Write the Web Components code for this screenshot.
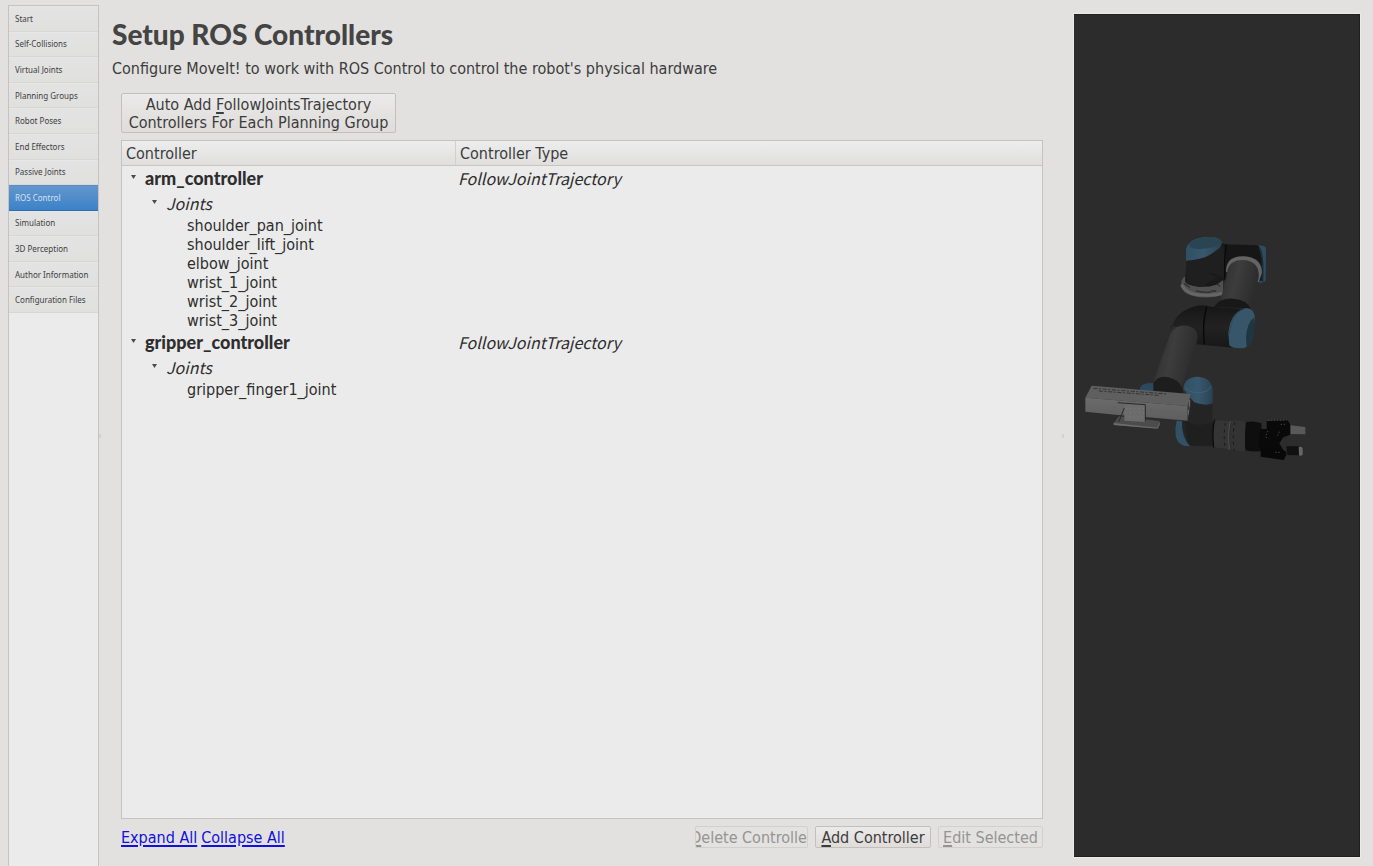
<!DOCTYPE html>
<html lang="en">
<head>
<meta charset="utf-8">
<title>MoveIt! Setup Assistant</title>
<style>
html, body { margin: 0; height: 100%; }
body { overflow: hidden; background: #e2e1df; color: #3c3c3c;
  --ui: "DejaVu Sans Condensed", "DejaVu Sans", sans-serif; --strong: Lato, "Noto Sans", sans-serif;
  --slanted: "Noto Sans CJK SC", "Noto Sans", sans-serif; --small: "Noto Sans", sans-serif;
  font: 16px/20px var(--ui); }
</style>
</head>
<body>
<setup-assistant>
  <nav-list slot="nav">
    <nav-item>Start</nav-item>
    <nav-item>Self-Collisions</nav-item>
    <nav-item>Virtual Joints</nav-item>
    <nav-item>Planning Groups</nav-item>
    <nav-item>Robot Poses</nav-item>
    <nav-item>End Effectors</nav-item>
    <nav-item>Passive Joints</nav-item>
    <nav-item current>ROS Control</nav-item>
    <nav-item>Simulation</nav-item>
    <nav-item>3D Perception</nav-item>
    <nav-item>Author Information</nav-item>
    <nav-item>Configuration Files</nav-item>
  </nav-list>
  <controllers-page>
    <span slot="title">Setup ROS Controllers</span>
    <span slot="intro">Configure MoveIt! to work with ROS Control to control the robot's physical hardware</span>
    <push-button slot="auto" class="auto">Auto Add <u>F</u>ollowJointsTrajectory<br>Controllers For Each Planning Group</push-button>
    <controller-tree slot="tree"></controller-tree>
    <push-button slot="actions" disabled style="width:113px"><u>D</u>elete Controller</push-button>
    <push-button slot="actions" style="width:116px"><u>A</u>dd Controller</push-button>
    <push-button slot="actions" disabled style="width:105px"><u>E</u>dit Selected</push-button>
  </controllers-page>
  <robot-view slot="view"></robot-view>
</setup-assistant>
<script>
function define(name, html, setup) {
  const template = document.createElement('template');
  template.innerHTML = html;
  customElements.define(name, class extends HTMLElement {
    constructor() {
      super();
      this.attachShadow({ mode: 'open' }).append(template.content.cloneNode(true));
    }
    connectedCallback() { if (setup) setup(this, this.shadowRoot); }
  });
}

define('setup-assistant', `
<style>
:host { display: grid; grid-template-columns: 91px 12px minmax(0, 1fr) 22px 286px; height: 100vh; padding: 0 13px 0 8px; box-sizing: border-box; }
.grip { align-self: center; justify-self: center; margin-top: 5px; width: 2px; height: 4px; background: #d2d0cd; border-radius: 1px; }
.grip.left { justify-self: start; }
</style>
<slot name="nav"></slot><span class="grip left"></span><slot></slot><span class="grip"></span><slot name="view"></slot>`);

define('nav-list', `
<style>
:host { display: block; margin-top: 5px; border: 1px solid #c6c3be; border-bottom: 0; background: #ebebeb; box-sizing: border-box; }
nav { display: grid; grid-auto-rows: 1fr; min-height: 307px; }
</style>
<nav aria-label="Setup steps"><slot></slot></nav>`);

define('nav-item', `
<style>
:host { display: grid; }
button { margin: 0; padding: 0 0 0 6px; border: 0; border-bottom: 1px solid #d8d7d5; border-top: 1px solid #e6e6e5;
  background: linear-gradient(#e3e3e3, #e0e0df); text-align: left; font: 8px/12px var(--small); color: #404040; white-space: nowrap; }
:host([current]) button { background: linear-gradient(#6296cd, #3c82c8); border-top-color: #5b8dc2; border-bottom-color: #2e6db0; color: #d4e2f0; }
</style>
<button type="button"><slot></slot></button>`, (el, root) => {
  if (el.hasAttribute('current')) root.querySelector('button').setAttribute('aria-current', 'page');
});

define('push-button', `
<style>
:host { display: inline-block; }
button { display: flex; justify-content: center; align-items: center; width: 100%; height: 100%; margin: 0; padding: 2px 0 0; overflow: hidden;
  border: 1px solid #c4bfba; border-radius: 2px; background: linear-gradient(#ebeaea, #dfdcda); color: #3c3c3c; font: inherit; white-space: nowrap; }
button:disabled { color: #949494; border-color: #d2d0cd; background: #e3e2e0; }
span { flex: none; text-align: center; }
::slotted(u) { text-underline-offset: 2px; text-decoration-thickness: 2px; }
</style>
<button type="button"><span><slot></slot></span></button>`, (el, root) => {
  root.querySelector('button').disabled = el.hasAttribute('disabled');
});

define('controllers-page', `
<style>
:host { display: flex; flex-direction: column; padding: 16px 9px 18px 0; min-width: 0; }
h1 { margin: 0 0 0 1px; font: 900 28px/36px var(--strong); color: #444; }
p { margin: 7px 0 14px 1px; font-size: 16px; line-height: 20px; }
.body { flex: 1; min-height: 0; display: flex; flex-direction: column; margin: 0 0 0 10px; }
::slotted(.auto) { align-self: flex-start; width: 275px; height: 40px; line-height: 18px; margin-bottom: 7px; }
::slotted(controller-tree) { flex: 1; min-height: 0; }
footer { display: flex; justify-content: space-between; margin-top: 7px; height: 22px; line-height: 20px; }
.links { display: flex; gap: 4px; padding-top: 2px; }
a { color: #1010e0; text-underline-offset: 2px; text-decoration-thickness: 2px; }
.actions { display: flex; gap: 7px; }
</style>
<h1><slot name="title"></slot></h1>
<p><slot name="intro"></slot></p>
<div class="body">
  <slot name="auto"></slot>
  <slot name="tree"></slot>
  <footer><div class="links"><a href="#expand">Expand All</a><a href="#collapse">Collapse All</a></div>
  <div class="actions"><slot name="actions"></slot></div></footer>
</div>`);

const controllers = [
  { name: 'arm_controller', type: 'FollowJointTrajectory', joints: ['shoulder_pan_joint', 'shoulder_lift_joint', 'elbow_joint', 'wrist_1_joint', 'wrist_2_joint', 'wrist_3_joint'] },
  { name: 'gripper_controller', type: 'FollowJointTrajectory', joints: ['gripper_finger1_joint'] }
];

define('controller-tree', `
<style>
:host { display: block; border: 1px solid #c6c3be; background: #ebebeb; color: #2e2e2e; }
table { width: 100%; border-collapse: separate; border-spacing: 0; table-layout: fixed; }
th, td { padding: 0; text-align: left; white-space: nowrap; font-weight: normal; }
th { height: 22px; line-height: 22px; padding: 2px 0 0 4px; border-bottom: 1px solid #c9c4bf; background: linear-gradient(#ededed, #e0dfde); color: #3c3c3c; }
th + th { border-left: 1px solid #d2d0cd; }
th:first-child { width: 329px; }
.controller td { height: 25px; line-height: 25px; }
.controller td:first-child { font: 900 18px/25px var(--strong); padding-left: 8px; }
.controller td + td, .group td { font-style: italic; font-family: var(--slanted); }
.controller td + td { padding-left: 3px; }
.group td { height: 25px; line-height: 25px; padding-left: 29px; }
.joint td { height: 19px; line-height: 19px; padding-left: 65px; }
button { width: 8px; height: 8px; margin: 0 7px 0 0; padding: 0; border: 0; background: none; vertical-align: 4px; line-height: 0; }
svg { display: block; }
</style>
<table><thead><tr><th scope="col">Controller</th><th scope="col">Controller Type</th></tr></thead><tbody></tbody></table>`, (el, root) => {
  const arrow = '<button type="button" aria-label="Collapse" aria-expanded="true"><svg width="8" height="8"><path d="M1 2h5L3.500 6z" fill="#4a4a4a"/></svg></button>';
  root.querySelector('tbody').innerHTML = controllers.map(c =>
    `<tr class="controller"><td>${arrow}${c.name}</td><td>${c.type}</td></tr><tr class="group"><td>${arrow}Joints</td><td></td></tr>` +
    c.joints.map(j => `<tr class="joint"><td>${j}</td><td></td></tr>`).join('')).join('');
});

define('robot-view', `
<style>
:host { display: block; margin: 14px 0 9px; background: #2c2c2c; box-shadow: inset -1px 1px #1f1f1f, inset 0 -1px #1f1f1f, 0 0 0 1px #ebebe9; overflow: hidden; }
svg { display: block; width: 100%; height: 100%; }
</style>
<svg viewBox="0 0 286 843" role="img" aria-label="Robot arm with gripper">
<defs>
<linearGradient id="tube" x1="0" x2="1" y1="0" y2=".3"><stop offset="0" stop-color="#2b2b2b"/><stop offset=".5" stop-color="#3d3d3d"/><stop offset="1" stop-color="#2c2c2c"/></linearGradient>
<linearGradient id="dark" x1="0" x2="0" y1="0" y2="1"><stop offset="0" stop-color="#161616"/><stop offset=".5" stop-color="#222"/><stop offset="1" stop-color="#171717"/></linearGradient>
<linearGradient id="blue" x1="0" x2="1"><stop offset="0" stop-color="#2f4f64"/><stop offset=".5" stop-color="#38586e"/><stop offset="1" stop-color="#2a4252"/></linearGradient>
<linearGradient id="rail" x1="0" x2="0" y1="0" y2="1"><stop offset="0" stop-color="#6b6b6b"/><stop offset="1" stop-color="#5e5e5e"/></linearGradient>
</defs>
<g transform="translate(0 211) scale(.33333)">
<!-- base flange -->
<path d="M322 168q5-15 20-14l105 12v44q-50 14-93 2-30-10-32-27z" fill="#505050"/>
<path d="M323 178q12 30 60 32 40 2 62-6" fill="none" stroke="#666" stroke-width="9"/>
<path d="M330 176q20 12 16 12m20 10q30 6 45 3m0-3h15m2-22l10 8" fill="none" stroke="#303030" stroke-width="4"/>
<!-- shoulder -->
<path d="M550 62q25-2 26 8l-1 95q-2 10-19 8z" fill="#2d4d61"/><path d="M552 64q18 6 14 108" fill="none" stroke="#1a303e" stroke-width="4"/>
<path d="M337 105L445 55l10 3 97 3q20 45 12 106l-104 2-14-4q-20 24-74 20-34-3-39-16z" fill="url(#dark)"/>
<path d="M458 62l92 2q14 22 13 60-14-32-52-30-46 2-57 42z" fill="#161616"/>
<path d="M338 110L450 60l-4 80q-30 26-62 45-44-4-46-15z" fill="#1f1f1f"/>
<path d="M408 145q22 3 40 22" fill="none" stroke="#141414" stroke-width="3"/>
<path d="M457 58q-8 50-4 106" fill="none" stroke="#090909" stroke-width="4"/>
<path d="M336 107V72q10-34 65-36 42 0 43 18-1 12-17 22-30 28-91 31z" fill="url(#blue)"/>
<ellipse cx="393" cy="54" rx="48" ry="17" fill="#2b4452" transform="rotate(-8 393 54)"/>
<!-- upper arm -->
<path d="M456 140q0-48 54-46 54 4 54 50l-10 28z" fill="#636363"/>
<path d="M459 145q4-42 51-40 48 4 44 54l-28 94-90-11z" fill="url(#tube)"/>
<path d="M420 245q18-27 58-24 42 4 52 30z" fill="#181818"/>
<!-- elbow -->
<path d="M290 319q10-62 80-77 22-3 40 3l108 8-26 117-124-12q6-42-79-56z" fill="url(#dark)"/>
<path d="M398 246q-14 45-7 112" fill="none" stroke="#070707" stroke-width="4"/>
<path d="M290 325q18-30 53-22 30 7 28 38l-48 143-85-14z" fill="url(#tube)"/>
<path d="M463 325q6-66 54-76 28 3 25 34l-6 55q-6 30-36 32-26 1-34-9z" fill="#38566a"/>
<path d="M516 340q2-48 24-62 3 20-4 62-8 24-18 26z" fill="#1f3542"/>
<path d="M466 325q8-60 46-74" fill="none" stroke="#263f4d" stroke-width="3" stroke-dasharray="5 3"/>
<!-- wrist -->
<path d="M198 488q5-16 45-14v30h-45z" fill="#2b4a5e"/>
<path d="M238 474q20-30 60-12 27 10 30 46l-90-8z" fill="#1d1d1d"/>
<path d="M350 500l65 20v68q8 6 58 0v77l-130-2-28-83z" fill="#242424"/>
<path d="M328 492q2-36 44-37 42 4 44 40v40q-20 10-56-3z" fill="url(#blue)"/>
<path d="M334 485q8 18 40 18 34-2 36-20" fill="none" stroke="#3f6075" stroke-width="3"/>
<path d="M335 588q40 22 82 4v70l-75-2z" fill="#1f1f1f"/>
<path d="M308 587l16 1q-2 50 24 76-35 2-43-30-3-25 3-47z" fill="#315266"/>
<path d="M422 584q-9 30-3 84" fill="none" stroke="#0b0b0b" stroke-width="4"/>
<path d="M424 585l44 3q-8 30-3 85l-44-6q-5-50 3-82z" fill="#353535"/>
<path d="M472 588q15-3 42 2v88q-20 2-44-5-5-50 2-85z" fill="#333"/>
<path d="M469 588q-8 30-3 86" fill="none" stroke="#555" stroke-width="3"/>
<path d="M482 592q-7 32-2 84M454 595q-6 30-1 74" fill="none" stroke="#161616" stroke-width="3" stroke-dasharray="8 12"/>
<path d="M516 592q20-6 46 3l2 82q-18 6-50-1-3-46 2-84z" fill="#0e0e0e"/>
<!-- gripper -->
<path d="M560 612h18v-24l62-3 8 12v32l-20 8-12 18 14 24h7v12l-9 14-68-10v-26l-6-8z" fill="#090909"/>
<path d="M561 668l70 8v28l-70-10z" fill="#080808"/>
<path d="M582 586h56m-18 12h14m-52 20l-7 14m0 4l9 4m32-20l-6 14m-6 48h16" fill="none" stroke="#484848" stroke-width="3" stroke-dasharray="4 5"/>
<path d="M650 601l44 5v22l-44-1z" fill="#595959"/>
<path d="M637 664h38v27l-35-1z" fill="#101010"/><path d="M674 666q12-2 12 5v18q-6 5-11 2z" fill="#666"/>
<!-- linear rail -->
<path d="M119 594l16-20 122 14-6 18-6 4-126-10z" fill="#4c4c4c"/><path d="M119 594l130 14 9-18v7l-7 14-132-11z" fill="#6c6c6c"/>
<path d="M53 482l298 25-10 36L34 518z" fill="#5f5f5f"/>
<path d="M34 518l307 25v44l-120-10-96-8L34 560z" fill="url(#rail)"/>
<path d="M351 507l-2 40-8 40v-44z" fill="#3d3d3d"/>
<path d="M346 525v20m-3 10v14" stroke="#888" stroke-width="2"/>
<path d="M58 490l223 17M74 498l180 13" stroke="#333" stroke-width="3" stroke-dasharray="13 4 6 5" fill="none"/>
<path d="M151 541h63v50l-63-4z" fill="#6c6c6c"/><path d="M131 533l83 6v51M151 549l-17 42" fill="none" stroke="#292929" stroke-width="3"/>
<path d="M155 551h55m-55 12h55m-58 13h58" stroke="#858585" stroke-width="2" stroke-dasharray="3 10"/>
<path d="M48 541l90 8m90 7l100 9" stroke="#474747" stroke-width="2" stroke-dasharray="2 22"/>
</g>
</svg>`);
</script>
</body>
</html>
